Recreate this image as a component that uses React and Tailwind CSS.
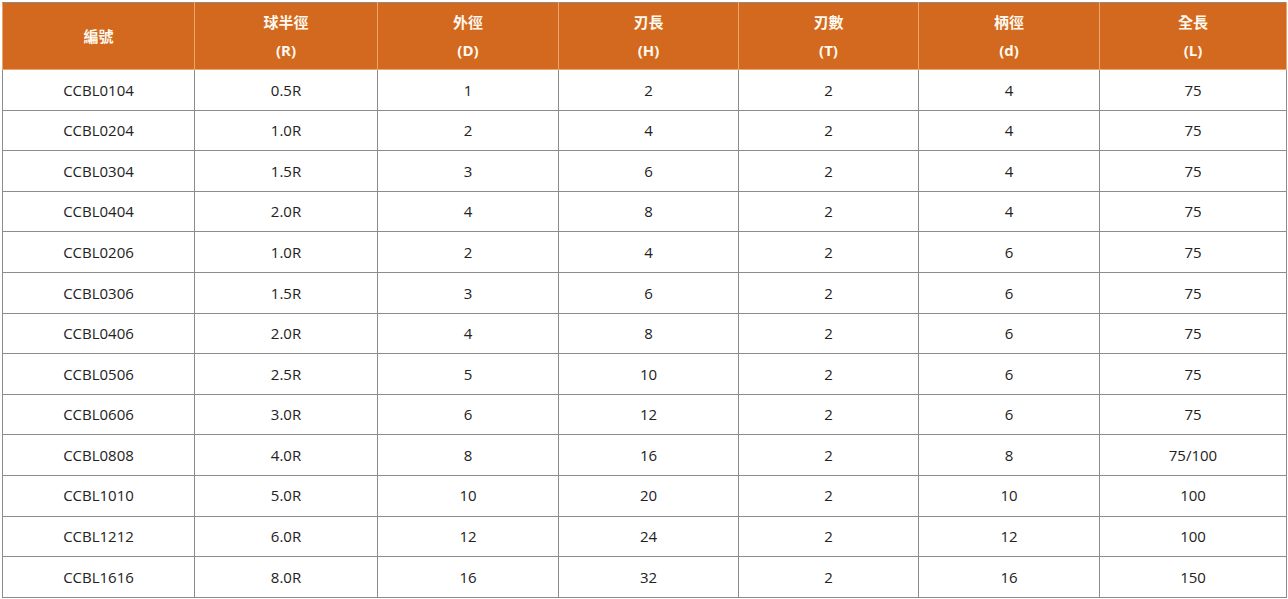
import React from "react";

const headers = [
  ["編號"],
  ["球半徑", "(R)"],
  ["外徑", "(D)"],
  ["刃長", "(H)"],
  ["刃數", "(T)"],
  ["柄徑", "(d)"],
  ["全長", "(L)"],
];

const rows = [
  ["CCBL0104", "0.5R", "1", "2", "2", "4", "75"],
  ["CCBL0204", "1.0R", "2", "4", "2", "4", "75"],
  ["CCBL0304", "1.5R", "3", "6", "2", "4", "75"],
  ["CCBL0404", "2.0R", "4", "8", "2", "4", "75"],
  ["CCBL0206", "1.0R", "2", "4", "2", "6", "75"],
  ["CCBL0306", "1.5R", "3", "6", "2", "6", "75"],
  ["CCBL0406", "2.0R", "4", "8", "2", "6", "75"],
  ["CCBL0506", "2.5R", "5", "10", "2", "6", "75"],
  ["CCBL0606", "3.0R", "6", "12", "2", "6", "75"],
  ["CCBL0808", "4.0R", "8", "16", "2", "8", "75/100"],
  ["CCBL1010", "5.0R", "10", "20", "2", "10", "100"],
  ["CCBL1212", "6.0R", "12", "24", "2", "12", "100"],
  ["CCBL1616", "8.0R", "16", "32", "2", "16", "150"],
];

const widths = ["w-[192px]", "w-[183px]", "w-[181px]", "w-[180px]", "w-[180px]", "w-[181px]", "w-[187px]"];

export default function App() {
  return (
    <div className="bg-white w-[1288px] h-[599px] pt-[2px] pl-[2px] font-['Open_Sans','Noto_Sans_CJK_TC',sans-serif]">
      <table className="border-collapse w-[1284px] table-fixed border border-[#8c8c8c]">
        <colgroup>
          {widths.map((w, i) => (
            <col key={i} className={w} />
          ))}
        </colgroup>
        <thead>
          <tr className="h-[67px] bg-[#d2691e]">
            {headers.map((h, i) => (
              <th
                key={i}
                className="border border-[#e9a76f] border-t-[#8c8c8c] text-center align-middle text-[15px] leading-[28px] font-bold text-[#fff8ee] p-0"
              >
                {h.map((line, j) => (
                  <div key={j}>{line}</div>
                ))}
              </th>
            ))}
          </tr>
        </thead>
        <tbody>
          {rows.map((r, i) => (
            <tr key={i} className="h-[40.6px]">
              {r.map((c, j) => (
                <td
                  key={j}
                  className="border border-[#8c8c8c] text-center align-middle text-[15px] text-[#222] p-0"
                >
                  {c}
                </td>
              ))}
            </tr>
          ))}
        </tbody>
      </table>
    </div>
  );
}
